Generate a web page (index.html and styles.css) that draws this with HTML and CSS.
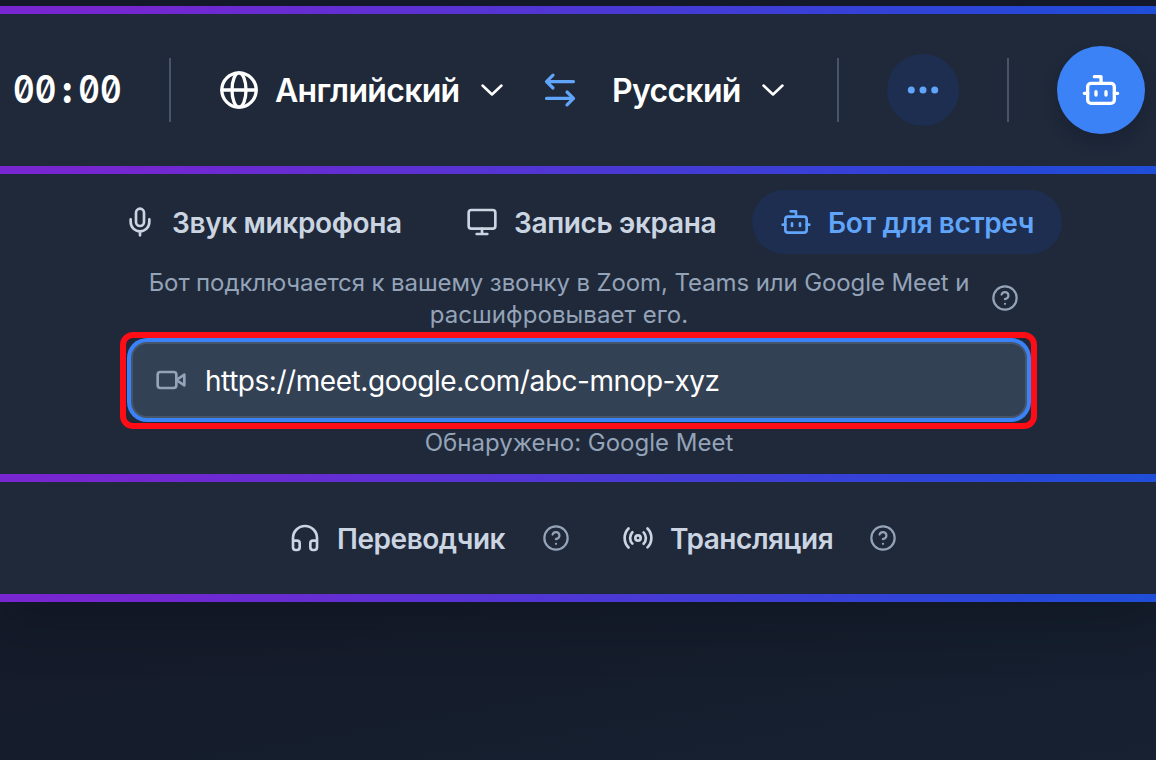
FILE: index.html
```html
<!DOCTYPE html>
<html lang="ru">
<head>
    <meta charset="UTF-8">
    <meta name="viewport" content="width=device-width, initial-scale=1.0">
    <title>Бот для встреч</title>
    <link rel="stylesheet" href="styles.css">
</head>
<body>
    <div class="panel">
        <div class="toolbar">
            <div class="timer"><span class="timer-value">00<span class="timer-colon">:</span>00</span></div>
            <div class="divider"></div>
            <div class="languages">
                <button class="language language-from">
                    <svg class="globe" viewBox="0 0 40 40"><circle cx="20" cy="20" r="17.2"/><ellipse cx="20" cy="20" rx="7" ry="17.2"/><path d="M3 20h34"/></svg>
                    <span class="language-name name-from">Английский</span>
                    <svg class="chevron" viewBox="0 0 24 16"><path d="M2.5 3.5 12 12.5l9.5-9"/></svg>
                </button>
                <button class="swap">
                    <svg viewBox="0 0 32 36"><path d="M29.5 9.6h-27M9 3.200l-6.500 6.400L9 16M2.500 26.400h27M23 20l6.500 6.400-6.500 6.400"/></svg>
                </button>
                <button class="language language-to">
                    <span class="language-name name-to">Русский</span>
                    <svg class="chevron" viewBox="0 0 24 16"><path d="M2.5 3.5 12 12.5l9.5-9"/></svg>
                </button>
            </div>
            <div class="divider"></div>
            <button class="more">
                <svg viewBox="0 0 36 36"><circle cx="6.300" cy="18" r="3.500"/><circle cx="18" cy="18" r="3.500"/><circle cx="29.700" cy="18" r="3.500"/></svg>
            </button>
            <div class="divider"></div>
            <button class="bot-button">
                <svg viewBox="0 0 24 24"><path d="M12 8V4H8"/><rect x="4" y="8" width="16" height="12" rx="2"/><path d="M2 14h2M20 14h2M15 13v2M9 13v2"/></svg>
            </button>
        </div>

        <div class="source">
            <div class="tabs">
                <button class="tab">
                    <svg class="icon" viewBox="0 0 24 24"><path d="M12 2a3 3 0 0 0-3 3v7a3 3 0 0 0 6 0V5a3 3 0 0 0-3-3Z"/><path d="M19 10v2a7 7 0 0 1-14 0v-2M12 19v3"/></svg>
                    <span class="tab-name tab-mic">Звук микрофона</span>
                </button>
                <button class="tab">
                    <svg class="icon" viewBox="0 0 24 24"><rect x="2" y="3" width="20" height="14" rx="2"/><path d="M8 21h8M12 17v4"/></svg>
                    <span class="tab-name tab-screen">Запись экрана</span>
                </button>
                <button class="tab active">
                    <svg class="icon" viewBox="0 0 24 24"><path d="M12 8V4H8"/><rect x="4" y="8" width="16" height="12" rx="2"/><path d="M2 14h2M20 14h2M15 13v2M9 13v2"/></svg>
                    <span class="tab-name tab-bot">Бот для встреч</span>
                </button>
            </div>

            <div class="hint">
                <p class="hint-text"><span class="hint-line">Бот подключается к вашему звонку в Zoom, Teams или Google Meet и</span><br>расшифровывает его.</p>
                <svg class="help" viewBox="0 0 24 24"><circle cx="12" cy="12" r="10"/><path d="M9.090 9a3 3 0 0 1 5.830 1c0 2-3 3-3 3M12 17h.01"/></svg>
            </div>

            <div class="highlight">
                <div class="link-field">
                    <svg class="icon" viewBox="0 0 24 24"><path d="m22 8-6 4 6 4V8Z"/><rect x="2" y="6" width="14" height="12" rx="2"/></svg>
                    <span class="link">https://meet.google.com/abc-mnop-xyz</span>
                </div>
            </div>

            <p class="detected">Обнаружено: Google Meet</p>
        </div>

        <div class="modes">
            <div class="mode mode-translator">
                <svg class="icon" viewBox="0 0 24 24"><path d="M3 14h3a2 2 0 0 1 2 2v3a2 2 0 0 1-2 2H5a2 2 0 0 1-2-2v-7a9 9 0 0 1 18 0v7a2 2 0 0 1-2 2h-1a2 2 0 0 1-2-2v-3a2 2 0 0 1 2-2h3"/></svg>
                <span class="mode-name">Переводчик</span>
                <svg class="help" viewBox="0 0 24 24"><circle cx="12" cy="12" r="10"/><path d="M9.090 9a3 3 0 0 1 5.830 1c0 2-3 3-3 3M12 17h.01"/></svg>
            </div>
            <div class="mode mode-stream">
                <svg class="icon" viewBox="0 0 24 24"><path d="M4.900 19.100C1 15.200 1 8.800 4.900 4.900M7.800 16.200c-2.300-2.300-2.300-6.100 0-8.500M16.200 7.800c2.300 2.300 2.300 6.100 0 8.500M19.100 4.900C23 8.800 23 15.100 19.100 19"/><circle cx="12" cy="12" r="2"/></svg>
                <span class="mode-name">Трансляция</span>
                <svg class="help" viewBox="0 0 24 24"><circle cx="12" cy="12" r="10"/><path d="M9.090 9a3 3 0 0 1 5.830 1c0 2-3 3-3 3M12 17h.01"/></svg>
            </div>
        </div>
    </div>
</body>
</html>
```
FILE: styles.css
```css
* {
    box-sizing: border-box;
}
body {
    margin: 0;
    height: 760px;
    padding-top: 6px;
    overflow: hidden;
    font-family: Inter, "Liberation Sans", sans-serif;
    background: linear-gradient(170deg, #151b2c 0%, #151b2a 70%, #151e2d 84%, #182132 100%);
}
button {
    margin: 0;
    padding: 0;
    border: none;
    background: none;
    color: inherit;
    font: inherit;
    cursor: pointer;
}
p {
    margin: 0;
}
svg {
    display: block;
    flex-shrink: 0;
    fill: none;
    stroke: currentColor;
    stroke-width: 2;
    stroke-linecap: round;
    stroke-linejoin: round;
}

/* gradient shows through the gaps between the sections */
.panel {
    display: flex;
    flex-direction: column;
    gap: 8px;
    padding: 8px 0;
    background: linear-gradient(90deg, #7826d1 0%, #7427d1 12%, #2847d8 88%, #204ed8 100%);
    box-shadow: 0 16px 48px rgba(10, 14, 24, 0.35);
}
.toolbar,
.source,
.modes {
    background-color: #1f293a;
}

/* Toolbar */
.toolbar {
    display: flex;
    align-items: center;
    height: 152px;
    color: #fff;
}
.timer {
    width: 156px;
    margin-left: 13px;
    padding-bottom: 3px;
}
.timer-value {
    display: inline-block;
    font-size: 38px;
    font-weight: 600;
    font-feature-settings: "tnum", "zero";
    transform: scaleX(0.88);
    transform-origin: left;
}
.timer-colon {
    display: inline-block;
    width: 25px;
    font-weight: 900;
    text-align: center;
}
.divider {
    width: 2px;
    height: 64px;
    background-color: #475569;
}
.languages {
    display: flex;
    align-items: center;
    width: 666px;
    padding-left: 48px;
}
.language {
    display: flex;
    align-items: center;
}
.language-name {
    padding-top: 2px;
    font-size: 32px;
    line-height: 40px;
    font-weight: 600;
    letter-spacing: -0.7px;
    text-align: left;
    white-space: nowrap;
}
.name-from {
    width: 205px;
    margin-left: 16px;
}
.name-to {
    width: 149px;
}
.globe {
    width: 40px;
    height: 40px;
    stroke-width: 3.3;
}
.chevron {
    width: 24px;
    height: 16px;
    stroke-width: 2.5;
}
.swap {
    margin: 0 36px 0 40px;
    color: #60a5fa;
}
.swap svg {
    width: 32px;
    height: 36px;
    stroke-width: 3.2;
}
.more {
    display: flex;
    align-items: center;
    justify-content: center;
    width: 72px;
    height: 72px;
    margin: 0 48px;
    border-radius: 50%;
    background-color: #1d2e51;
    color: #60a5fa;
}
.more svg {
    width: 36px;
    height: 36px;
    fill: currentColor;
    stroke: none;
}
.bot-button {
    display: flex;
    align-items: center;
    justify-content: center;
    width: 88px;
    height: 88px;
    margin-left: 48px;
    border-radius: 50%;
    background-color: #3b82f6;
    box-shadow: 0 8px 15px rgba(15, 20, 35, 0.3);
}
.bot-button svg {
    width: 40px;
    height: 40px;
}

/* Audio source */
.source {
    height: 300px;
    padding-top: 16px;
}
.icon {
    width: 32px;
    height: 32px;
    stroke-width: 2;
}
.help {
    width: 28px;
    height: 28px;
    color: #94a3b8;
    stroke-width: 1.9;
}
.tabs {
    display: flex;
    gap: 8px;
    padding-left: 96px;
}
.tab {
    display: flex;
    align-items: center;
    gap: 16px;
    height: 64px;
    padding: 0 28px;
    border-radius: 32px;
    color: #cbd5e1;
    font-size: 28px;
    font-weight: 600;
    letter-spacing: -0.35px;
    text-align: left;
    white-space: nowrap;
}
.tab.active {
    background-color: #1d2e51;
    color: #60a5fa;
}
.tab-name {
    padding-top: 1px;
}
.tab-mic {
    width: 230px;
}
.tab-screen {
    width: 202px;
}
.tab-bot {
    width: 206px;
    letter-spacing: -0.4px;
}
.hint {
    display: flex;
    align-items: center;
    margin: 12px 0 2px 139px;
}
.hint-text {
    width: 840px;
    margin-right: 12px;
    padding-top: 1px;
    margin-bottom: -1px;
    color: #94a3b8;
    font-size: 24px;
    line-height: 32px;
    letter-spacing: 0.07px;
    text-align: center;
    white-space: nowrap;
}
.hint-line {
    letter-spacing: -0.1px;
}
.highlight {
    width: 917px;
    height: 97px;
    margin-left: 120px;
    padding: 4px 5px;
    border: 6px solid #ff0d17;
    border-radius: 13px;
}
.link-field {
    display: flex;
    align-items: center;
    gap: 18px;
    width: 896px;
    height: 76px;
    padding-left: 22px;
    border: 2px solid #475569;
    border-radius: 16px;
    background-color: #334155;
    box-shadow: 0 0 0 4px #3b82f6;
    color: #94a3b8;
}
.link {
    padding-top: 1px;
    color: #fff;
    font-size: 28px;
    letter-spacing: -0.45px;
    white-space: nowrap;
}
.detected {
    padding-left: 2px;
    margin-top: -2px;
    color: #94a3b8;
    font-size: 24px;
    line-height: 32px;
    text-align: center;
}

/* Modes */
.modes {
    display: flex;
    align-items: center;
    height: 112px;
    padding-left: 289px;
    color: #cbd5e1;
}
.mode {
    display: flex;
    align-items: center;
}
.mode-translator {
    width: 333px;
}
.mode-name {
    width: 205px;
    margin-left: 16px;
    padding-top: 1px;
    font-size: 28px;
    font-weight: 600;
    letter-spacing: -0.45px;
    white-space: nowrap;
}
.mode-stream .mode-name {
    width: 199px;
}
```
